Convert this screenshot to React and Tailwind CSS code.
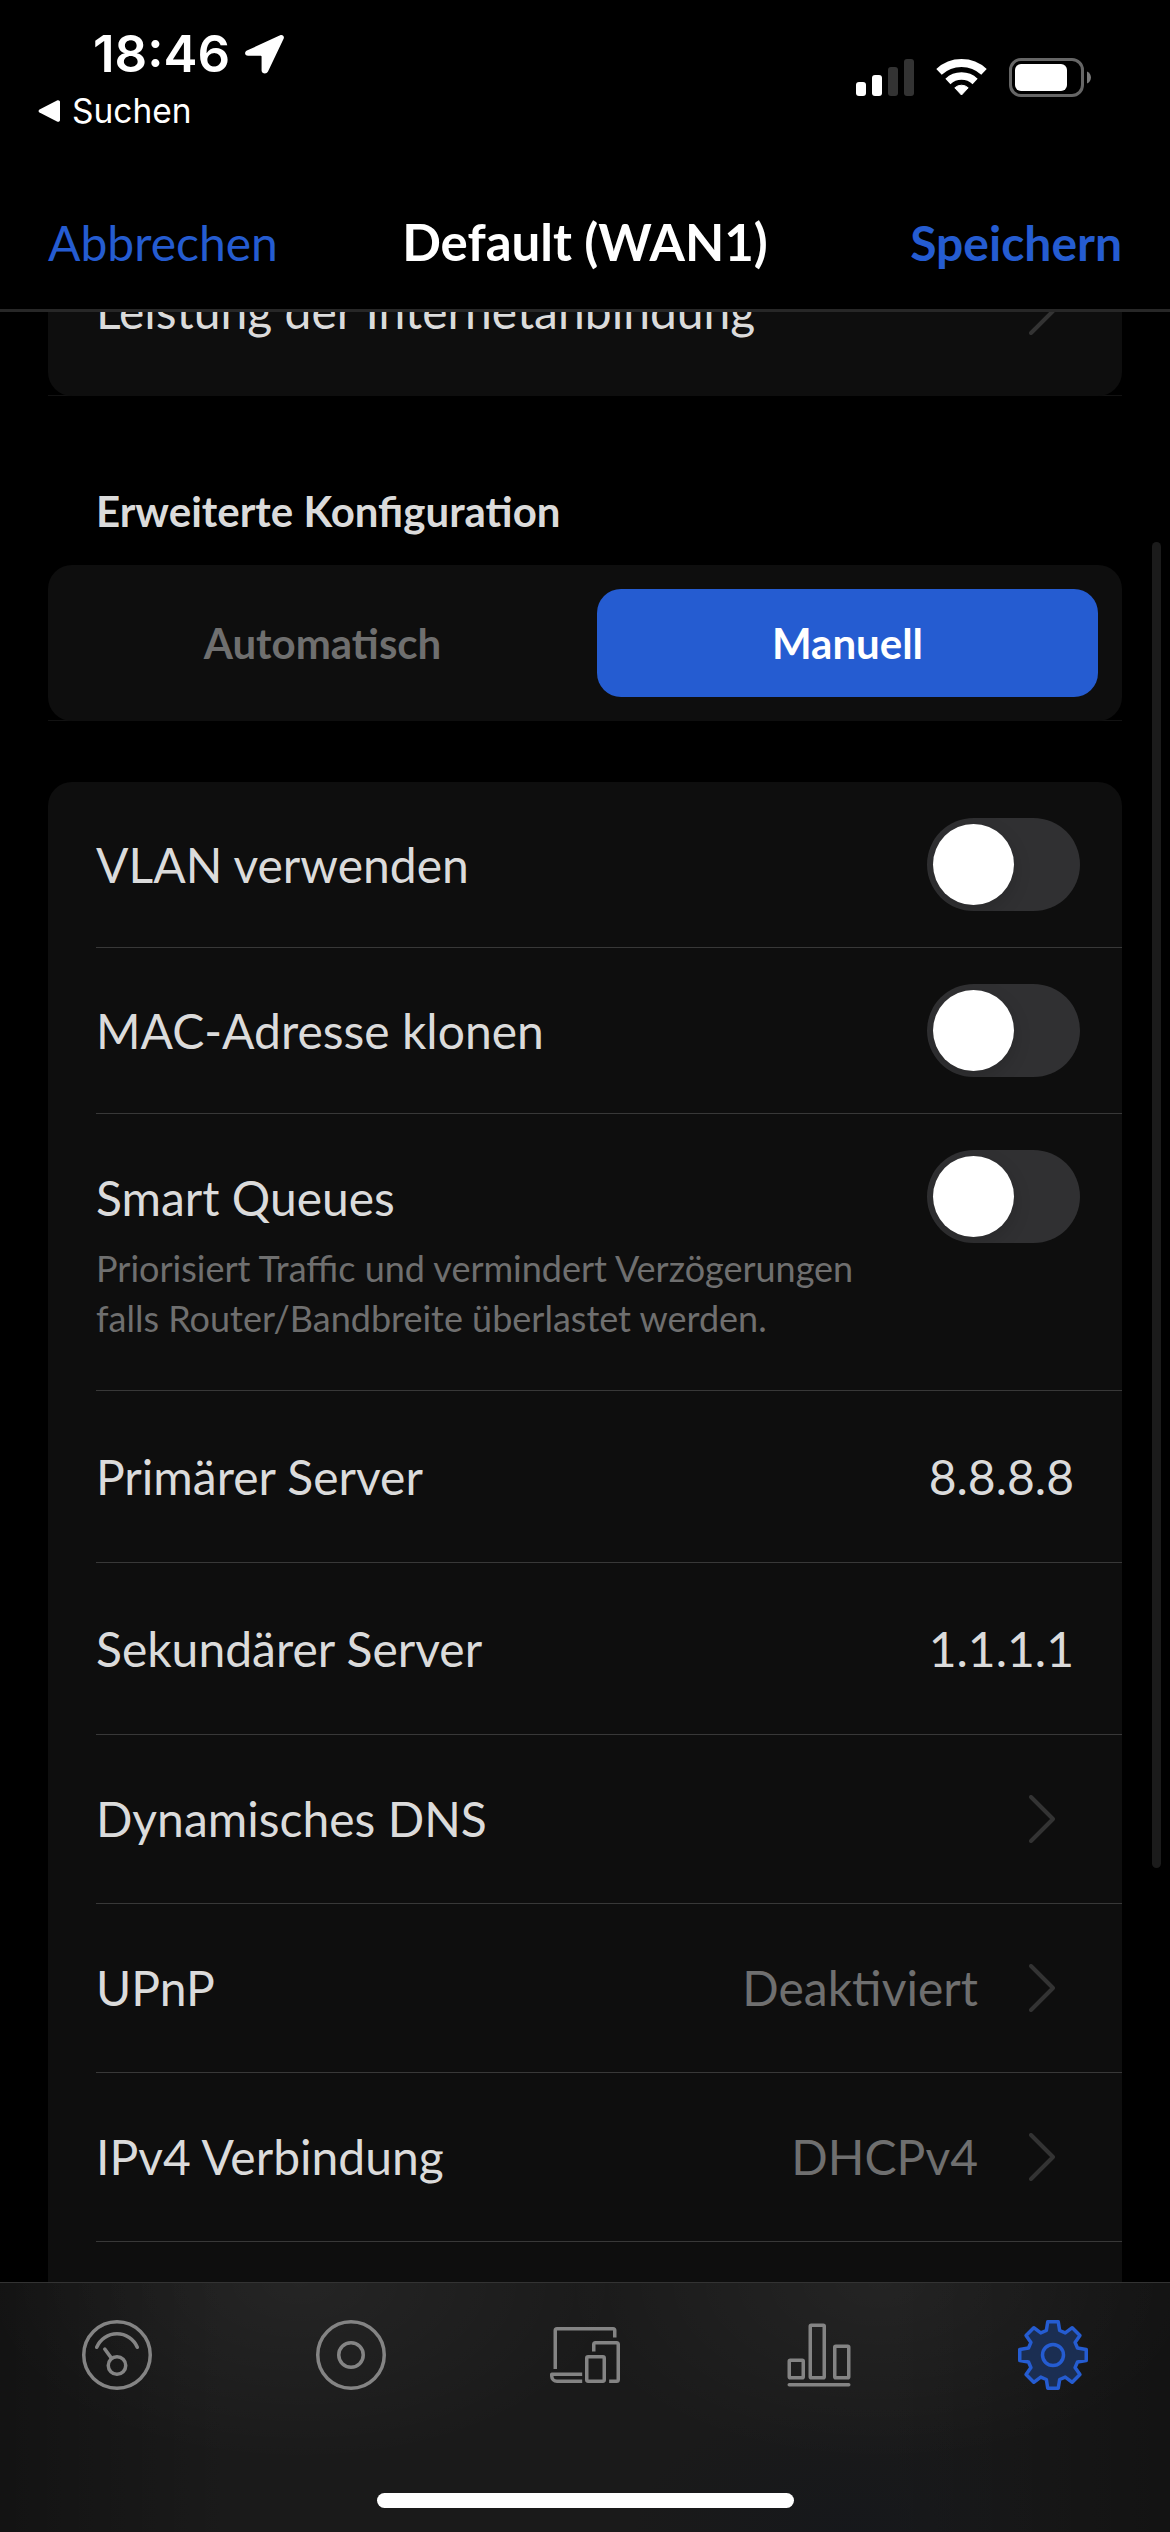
import { clsx } from 'clsx'

const tabs = [
  { id: 'dashboard', icon: GaugeIcon },
  { id: 'topology', icon: DiscIcon },
  { id: 'clients', icon: DevicesIcon },
  { id: 'statistics', icon: ChartIcon },
  { id: 'settings', icon: GearIcon, active: true },
]

function TabIcon({ children }) {
  return (
    <svg
      viewBox="0 0 24 24"
      className="h-[84px] w-[84px]"
      fill="none"
      stroke="currentColor"
      strokeWidth="1"
      strokeLinecap="round"
      strokeLinejoin="round"
    >
      {children}
    </svg>
  )
}

function GaugeIcon() {
  return (
    <TabIcon>
      <circle cx="12" cy="12" r="9.5" />
      <path d="M6.2 9.8a6.3 6.3 0 0 1 11.6 0" />
      <circle cx="12" cy="15" r="2.5" />
      <path d="M8.5 10.3l1.9 2.6" />
    </TabIcon>
  )
}

function DiscIcon() {
  return (
    <TabIcon>
      <circle cx="12" cy="12" r="9.5" />
      <circle cx="12" cy="12" r="3.5" />
    </TabIcon>
  )
}

function DevicesIcon() {
  return (
    <TabIcon>
      <g strokeLinecap="butt">
        <path d="M3.5 16V5a.5.5 0 0 1 .5-.5h16a.5.5 0 0 1 .5.5v2" />
        <path d="M11.2 17.5H2.5v.5A1.5 1.5 0 0 0 4 19.5h7.2" />
        <path d="M14.5 11V9a.5.5 0 0 1 .5-.5h6a.5.5 0 0 1 .5.5v10a.5.5 0 0 1-.5.5h-2.1" />
        <rect x="12.5" y="12.5" width="5" height="7" rx=".4" />
      </g>
    </TabIcon>
  )
}

function ChartIcon() {
  return (
    <TabIcon>
      <rect x="3.5" y="13.5" width="4" height="5" rx=".3" />
      <rect x="9.5" y="3.5" width="4" height="15" rx=".3" />
      <rect x="16.5" y="9.5" width="4" height="9" rx=".3" />
      <path d="M3.5 20.5h17" />
    </TabIcon>
  )
}

function GearIcon() {
  return (
    <TabIcon>
      <path
        className="fill-[#1b2e52]"
        d="M10.5 2.5H13.5L13.9 5 15.5 5.7 17.5 4.2 19.7 6.4 18.3 8.4 19 10 21.5 10.4V13.6L19 14 18.3 15.6 19.7 17.6 17.5 19.8 15.5 18.3 13.9 19 13.5 21.5H10.5L10.1 19 8.5 18.3 6.5 19.8 4.3 17.6 5.7 15.6 5 14 2.5 13.6V10.4L5 10 5.7 8.4 4.3 6.4 6.5 4.2 8.5 5.7 10.1 5Z"
      />
      <circle cx="12" cy="12" r="3" />
    </TabIcon>
  )
}

function StatusBar() {
  return (
    <div className="flex h-[174px] justify-between text-white">
      <div className="pt-[24px] pl-[38px] font-['Inter']">
        <div className="flex h-[60px] items-center gap-[15px] pl-[55px]">
          <span className="text-[51px] leading-[60px] font-semibold">18:46</span>
          <svg viewBox="0 0 40 45" preserveAspectRatio="none" className="h-[39px] w-[39px]" fill="currentColor">
            <path d="M36 .4 2 18c-3 1.6-2.4 6 1.2 6h12.6c.8 0 1.2.4 1.2 1.2V41c0 3.6 5 4.8 6.6 1.2L39.7 4C40.6 1.6 38.4-.8 36 .4Z" />
          </svg>
        </div>
        <div className="flex h-[54px] items-center gap-[12px]">
          <svg viewBox="0 0 22 24" preserveAspectRatio="none" className="h-[22px] w-[22px]" fill="currentColor">
            <path d="M19 .5 1.5 10.3a2 2 0 0 0 0 3.4L19 23.5c1.5.8 3 0 3-1.7V2.2C22 .5 20.5-.3 19 .5Z" />
          </svg>
          <span className="text-[33.5px]">Suchen</span>
        </div>
      </div>
      <div className="flex items-start gap-[22px] pt-[58px] pr-[79px]">
        <svg viewBox="0 0 58 38" className="h-[38px] w-[58px]" fill="currentColor">
          <rect x="0" y="24" width="10" height="14" rx="3" />
          <rect x="16" y="17" width="10" height="21" rx="3" />
          <rect x="32" y="9" width="10" height="29" rx="3" fill="#333" />
          <rect x="48" y="1" width="10" height="37" rx="3" fill="#333" />
        </svg>
        <svg viewBox="0 0 51 38" className="h-[38px] w-[51px]" fill="none" stroke="currentColor">
          <path d="M3 13.9A33 33 0 0 1 48 13.9" strokeWidth="8" />
          <path d="M11.9 23.4A20 20 0 0 1 39.1 23.4" strokeWidth="7.5" />
          <path
            d="M25.5 37 18.8 29.8A10 10 0 0 1 32.2 29.8Z"
            fill="currentColor"
            strokeWidth="1"
            strokeLinejoin="round"
          />
        </svg>
        <svg viewBox="0 0 82 39" className="h-[39px] w-[82px]" fill="none">
          <rect x="1.5" y="1.5" width="72" height="36" rx="10.5" stroke="#666" strokeWidth="3" />
          <rect x="6" y="6" width="52" height="27" rx="6" fill="#fff" />
          <path d="M78 13.5c5.3 2 5.3 10 0 12z" fill="#7a7a7a" />
        </svg>
      </div>
    </div>
  )
}

function NavBar() {
  return (
    <header className="grid h-[138px] grid-cols-[1fr_auto_1fr] items-center border-b-[3px] border-[#272727] px-12 pt-[2px] text-[48px] text-[#255cd1]">
      <span>Abbrechen</span>
      <h1 className="text-[51px] font-bold text-white">Default (WAN1)</h1>
      <span className="text-right font-bold">Speichern</span>
    </header>
  )
}

function Chevron() {
  return (
    <svg
      viewBox="0 0 26 48"
      className="mr-[67px] ml-[51px] h-[48px] w-[26px] text-[#333]"
      fill="none"
      stroke="currentColor"
      strokeWidth="4"
      strokeLinecap="round"
      strokeLinejoin="round"
    >
      <path d="M2 2l22 22L2 46" />
    </svg>
  )
}

function Toggle() {
  return (
    <span className="mr-[42px] flex h-[93px] w-[153px] shrink-0 overflow-hidden rounded-full bg-[#303032] p-[6px]">
      <span className="h-[81px] w-[81px] rounded-full bg-white shadow-[0_6px_18px_rgba(0,0,0,0.15)]" />
    </span>
  )
}

function Row({ label, hint, height, children }) {
  return (
    <div className={clsx('ml-12 flex border-b border-[#383838]', hint ? 'items-start pt-9' : 'items-center', height)}>
      <div className={clsx('flex-1', hint && 'pt-[18px]')}>
        <div className="text-[48px] leading-[60px]">{label}</div>
        {hint && <p className="mt-[15px] w-[800px] text-[36px] leading-[50px] text-[#6f6f6f]">{hint}</p>}
      </div>
      {children}
    </div>
  )
}

function App() {
  return (
    <div className="flex h-[2532px] w-[1170px] flex-col overflow-hidden bg-black font-['Lato',sans-serif] text-[#dbdbdb]">
      <StatusBar />
      <NavBar />

      <main className="relative h-[1970px] shrink-0 overflow-hidden px-12">
        {/* scrolled partly under the nav bar */}
        <div className="-mt-[86px] border-b border-[#121212]">
          <div className="-mb-px flex h-[170px] items-center rounded-b-3xl bg-[#0e0e0e] pl-12">
            <span className="flex-1 text-[48px]">Leistung der Internetanbindung</span>
            <Chevron />
          </div>
        </div>

        <h2 className="mt-[89px] px-12 text-[42px] leading-[52px] font-bold">Erweiterte Konfiguration</h2>

        <div className="mt-[28px] border-b border-[#121212]">
          <div className="-mb-px flex h-[156px] gap-6 rounded-3xl bg-[#0e0e0e] p-6 text-[42px] font-bold">
            <button className="flex-1 text-[#6f6f6f]">Automatisch</button>
            <button className="flex-1 rounded-3xl bg-[#255cd1] text-white">Manuell</button>
          </div>
        </div>

        <div className="mt-[61px] h-[1600px] rounded-t-3xl bg-[#0e0e0e]">
          <Row label="VLAN verwenden" height="h-[166px]">
            <Toggle />
          </Row>
          <Row label="MAC-Adresse klonen" height="h-[166px]">
            <Toggle />
          </Row>
          <Row
            label="Smart Queues"
            hint="Priorisiert Traffic und vermindert Verzögerungen falls Router/Bandbreite überlastet werden."
            height="h-[277px]"
          >
            <Toggle />
          </Row>
          <Row label="Primärer Server" height="h-[172px]">
            <span className="pr-12 text-[48px]">8.8.8.8</span>
          </Row>
          <Row label="Sekundärer Server" height="h-[172px]">
            <span className="pr-12 text-[48px]">1.1.1.1</span>
          </Row>
          <Row label="Dynamisches DNS" height="h-[169px]">
            <Chevron />
          </Row>
          <Row label="UPnP" height="h-[169px]">
            <span className="text-[48px] text-[#6f6f6f]">Deaktiviert</span>
            <Chevron />
          </Row>
          <Row label="IPv4 Verbindung" height="h-[169px]">
            <span className="text-[48px] text-[#6f6f6f]">DHCPv4</span>
            <Chevron />
          </Row>
        </div>

        {/* scroll indicator */}
        <div className="absolute top-[230px] right-[9px] h-[1326px] w-[9px] rounded-full bg-[#1b1b1b]" />
      </main>

      <nav className="flex h-[250px] shrink-0 flex-col border-t border-[#333] bg-[#131313] bg-[radial-gradient(ellipse_320px_180px_at_300px_0px,#ffffff0c,transparent),radial-gradient(ellipse_320px_180px_at_880px_0px,#ffffff0b,transparent),radial-gradient(ellipse_220px_130px_at_850px_250px,#15171bcc,#15171b00),linear-gradient(to_right,transparent,#ffffff08_20%,#ffffff08_75%,transparent)]">
        <div className="grid grid-cols-5 pt-[30px]">
          {tabs.map(({ id, icon: Icon, active }) => (
            <div key={id} className={clsx('flex justify-center', active ? 'text-[#255cd1]' : 'text-[#848484]')}>
              <Icon />
            </div>
          ))}
        </div>
        <div className="mx-auto mt-[96px] h-[15px] w-[417px] rounded-full bg-white" />
      </nav>
    </div>
  )
}

export default App
